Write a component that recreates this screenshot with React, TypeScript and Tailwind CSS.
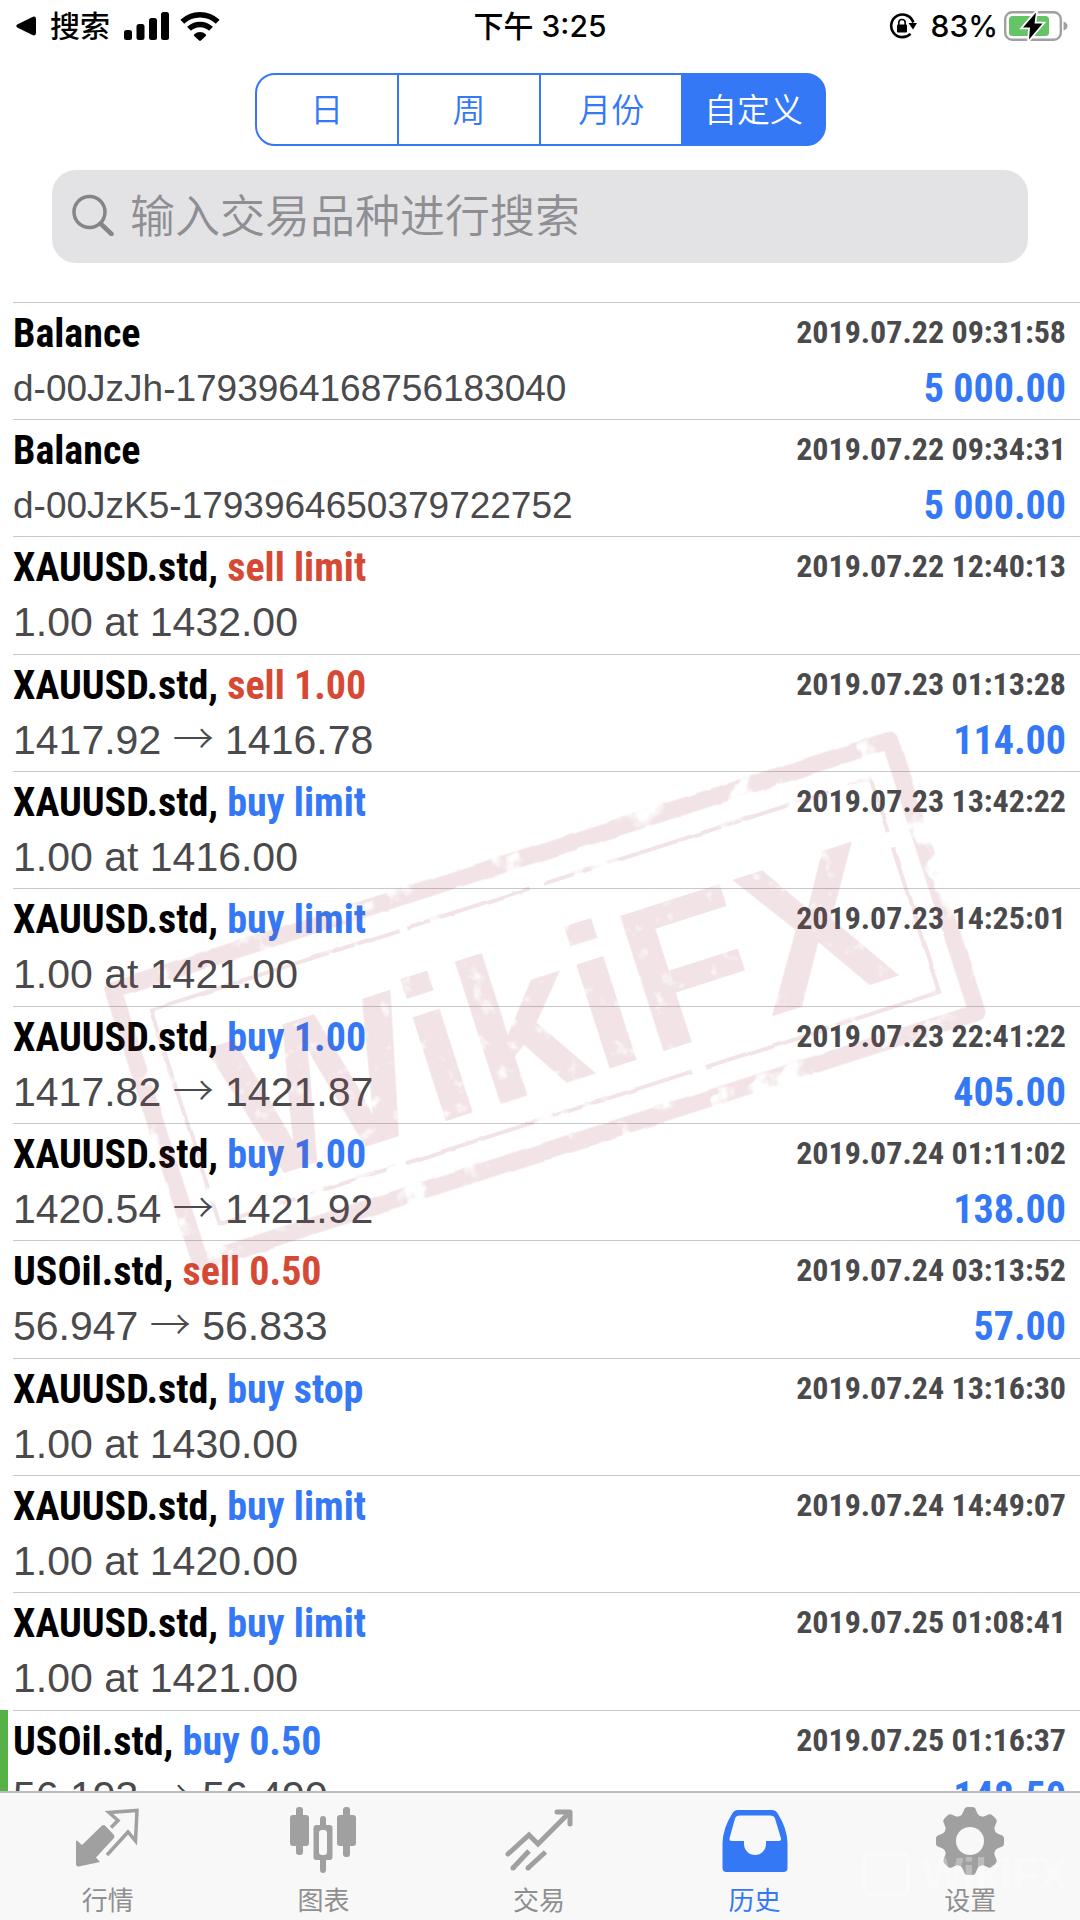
import { useState, type ReactNode } from "react";

type Side = "buy" | "sell";

interface HistoryItem {
  title: string;
  side?: Side;
  action?: string;
  detail?: string;
  from?: string;
  to?: string;
  time: string;
  profit?: string;
  marked?: boolean;
}

const HISTORY: HistoryItem[] = [
  { title: "Balance", detail: "d-00JzJh-1793964168756183040", time: "2019.07.22 09:31:58", profit: "5 000.00" },
  { title: "Balance", detail: "d-00JzK5-1793964650379722752", time: "2019.07.22 09:34:31", profit: "5 000.00" },
  { title: "XAUUSD.std", side: "sell", action: "limit", detail: "1.00 at 1432.00", time: "2019.07.22 12:40:13" },
  { title: "XAUUSD.std", side: "sell", action: "1.00", from: "1417.92", to: "1416.78", time: "2019.07.23 01:13:28", profit: "114.00" },
  { title: "XAUUSD.std", side: "buy", action: "limit", detail: "1.00 at 1416.00", time: "2019.07.23 13:42:22" },
  { title: "XAUUSD.std", side: "buy", action: "limit", detail: "1.00 at 1421.00", time: "2019.07.23 14:25:01" },
  { title: "XAUUSD.std", side: "buy", action: "1.00", from: "1417.82", to: "1421.87", time: "2019.07.23 22:41:22", profit: "405.00" },
  { title: "XAUUSD.std", side: "buy", action: "1.00", from: "1420.54", to: "1421.92", time: "2019.07.24 01:11:02", profit: "138.00" },
  { title: "USOil.std", side: "sell", action: "0.50", from: "56.947", to: "56.833", time: "2019.07.24 03:13:52", profit: "57.00" },
  { title: "XAUUSD.std", side: "buy", action: "stop", detail: "1.00 at 1430.00", time: "2019.07.24 13:16:30" },
  { title: "XAUUSD.std", side: "buy", action: "limit", detail: "1.00 at 1420.00", time: "2019.07.24 14:49:07" },
  { title: "XAUUSD.std", side: "buy", action: "limit", detail: "1.00 at 1421.00", time: "2019.07.25 01:08:41" },
  { title: "USOil.std", side: "buy", action: "0.50", from: "56.193", to: "56.490", time: "2019.07.25 01:16:37", profit: "148.50", marked: true },
];

const PERIODS = ["日", "周", "月份", "自定义"];

function StatusBar() {
  return (
    <header className="grid h-[52px] grid-cols-3 items-center px-4 font-['Inter','Noto_Sans_CJK_SC',sans-serif] text-[30px] leading-none font-medium text-black">
      <div className="flex items-center">
        <svg className="h-5 w-5" viewBox="0 0 20 20">
          <path d="M1.2 8.6 17 .7Q20 0 20 3v14q0 3-3 2.300L1.200 11.400Q-.6 10 1.200 8.600Z" />
        </svg>
        <span className="ml-3.5">搜索</span>
        <svg className="ml-3.5 h-[30px] w-[46px]" viewBox="0 0 46 30">
          <rect x="0" y="19" width="8" height="10" rx="2.500" />
          <rect x="12.500" y="13" width="8" height="16" rx="2.500" />
          <rect x="25" y="7" width="8" height="22" rx="2.500" />
          <rect x="37" y="1" width="8" height="28" rx="2.500" />
        </svg>
        <svg className="ml-2.5 h-[30px] w-10" viewBox="0 0 40 30">
          <g fill="none" stroke="#000" strokeWidth="5.500">
            <path d="M2.300 10.800a25.500 25.500 0 0 1 35.400 0" />
            <path d="M9 17.800a16 16 0 0 1 22 0" />
          </g>
          <path d="M14.300 23.200a8.500 8.500 0 0 1 11.400 0q.9.900 0 1.800L21 29.400q-1 .9-2 0L14.300 25q-.9-.9 0-1.800Z" />
        </svg>
      </div>
      <div className="text-center">下午 3:25</div>
      <div className="-mr-1 flex items-center justify-end">
        <svg className="h-7 w-7" viewBox="0 0 28 28">
          <path d="M24.300 10.500A11.300 11.300 0 1 0 21.500 21.800" fill="none" stroke="#000" strokeWidth="2.600" />
          <path d="M19.500 11h8.500l-4 6.500Z" />
          <rect x="8" y="12.500" width="10" height="8" rx="1" />
          <path d="M9.800 13v-2.300a3.200 3.200 0 0 1 6.400 0V13" fill="none" stroke="#000" strokeWidth="1.600" />
        </svg>
        <span className="ml-3.5">83%</span>
        <svg className="ml-1.5 h-8 w-16" viewBox="0 0 64 32">
          <rect x="1.200" y="2.200" width="55.600" height="27.600" rx="7" fill="#fff" stroke="#a0a0a4" strokeWidth="2.400" />
          <rect x="5" y="6" width="40" height="20" rx="3.500" fill="#64c466" />
          <path d="M59.500 11.500q4 1.500 4 4.500t-4 4.500Z" fill="#a0a0a4" />
          <path d="M32 2.500 19 17.500h7L25 29.500 38.500 13.500H30.500Z" stroke="#fff" strokeWidth="3.500" paintOrder="stroke" />
        </svg>
      </div>
    </header>
  );
}

function HistoryRow({ item }: { item: HistoryItem }) {
  const sideColor = item.side === "sell" ? "text-[#d64a35]" : "text-[#3478f6]";

  return (
    <li className="flex h-[117px] shrink-0 nth-[3n]:h-[118px]">
      <div className="w-[13px] shrink-0">{item.marked && <div className="h-full w-2 bg-[#56b147]" />}</div>
      <div className="flex-1 border-t border-[#c8c7cc] pt-[3px] pr-3.5">
        <div className="flex h-[55px] items-start justify-between font-['Roboto_Condensed','Liberation_Sans',sans-serif] font-bold">
          <h2 className="text-[40px] leading-[56px] text-black">
            {item.title}
            {item.side && (
              <>
                , <span className={sideColor}>{item.side} {item.action}</span>
              </>
            )}
          </h2>
          <time className="text-[32px] leading-[52px] text-[#4a4a4c]">{item.time}</time>
        </div>
        <div className="flex h-[55px] items-center justify-between">
          {item.from ? (
            <p className="text-[41px] leading-[55px] text-[#4a4a4c]">
              {item.from} <span className="font-['Noto_Sans_CJK_SC',sans-serif] font-light leading-none">→</span> {item.to}
            </p>
          ) : (
            <p className={item.side ? "text-[41px] leading-[55px] text-[#4a4a4c]" : "text-[37px] leading-[55px] text-[#4a4a4c]"}>
              {item.detail}
            </p>
          )}
          {item.profit && (
            <span className="font-['Roboto_Condensed','Liberation_Sans',sans-serif] text-[40px] leading-[55px] font-bold text-[#3478f6]">
              {item.profit}
            </span>
          )}
        </div>
      </div>
    </li>
  );
}

/* Worn rubber stamp laid over the list */
function Stamp() {
  return (
    <svg
      className="pointer-events-none absolute top-[414px] left-1/2 h-[580px] w-[920px] -translate-x-1/2"
      viewBox="0 0 920 580"
      aria-hidden="true"
    >
      <defs>
        <filter id="worn" x="-5%" y="-5%" width="110%" height="110%">
          <feTurbulence type="fractalNoise" baseFrequency="0.03" numOctaves="4" seed="8" result="noise" />
          <feColorMatrix in="noise" values="0 0 0 0 0  0 0 0 0 0  0 0 0 0 0  0 0 0 -7 5.200" result="holes" />
          <feComposite in="SourceGraphic" in2="holes" operator="in" result="cut" />
          <feDisplacementMap in="cut" in2="noise" scale="4" />
        </filter>
        <filter id="speckled" x="-5%" y="-5%" width="110%" height="110%">
          <feTurbulence type="fractalNoise" baseFrequency="0.060" numOctaves="3" seed="3" result="noise" />
          <feColorMatrix in="noise" values="0 0 0 0 0  0 0 0 0 0  0 0 0 0 0  0 0 0 -4 3.500" result="holes" />
          <feComposite in="SourceGraphic" in2="holes" operator="in" />
        </filter>
      </defs>
      <g transform="translate(465 285) rotate(-17.800)" opacity="0.140">
        <g filter="url(#worn)" fill="none" stroke="#a84452">
          <rect x="-408" y="-143" width="816" height="286" strokeWidth="17" strokeLinejoin="round" />
          <rect x="-378" y="-112" width="756" height="224" strokeWidth="4" strokeDasharray="260 8 130 14 300 10 90 16" />
        </g>
        <text
          x="-338"
          y="84"
          fill="#a84452"
          filter="url(#speckled)"
          className="font-['Liberation_Sans',sans-serif] text-[206px] font-bold"
        >
          WikiFX
        </text>
      </g>
    </svg>
  );
}

function QuotesIcon() {
  return (
    <svg className="h-[68px] w-[68px]" viewBox="0 0 68 68">
      <path d="M3 33.500 8 38 28 18.500q1.500-1.200 3 0L40 28q1 1.500 0 3L22 50.500l4 4.500-21 4.500q-3 .5-3-2.500V34Z" fill="#a0a0a0" />
      <path d="M37 20.500 44 13.500 35 5.500 63 3.500 61.500 34 54 25 33 48" fill="none" stroke="#a0a0a0" strokeWidth="3.500" />
    </svg>
  );
}

function ChartIcon() {
  return (
    <svg className="h-[68px] w-[68px]" viewBox="0 0 68 68" fill="#a0a0a0">
      <rect x="7" y="0" width="7" height="48" rx="3" />
      <rect x="1" y="8" width="19" height="31" rx="3" />
      <rect x="31" y="9" width="6" height="57" rx="3" />
      <rect x="24.500" y="18" width="19" height="35" rx="3" />
      <rect x="30" y="23" width="8" height="25" rx="3" fill="#f8f8f8" />
      <rect x="54" y="0" width="7" height="50" rx="3" />
      <rect x="48" y="8" width="19" height="31" rx="3" />
    </svg>
  );
}

function TradeIcon() {
  return (
    <svg className="h-[68px] w-[68px]" viewBox="0 0 68 68" fill="none" stroke="#a0a0a0">
      <path d="M3 47 24 28 33 37 64 6" strokeWidth="5" strokeLinecap="round" />
      <path d="M52 5h13v12" strokeWidth="5" strokeLinecap="round" strokeLinejoin="round" />
      <path d="M24 44 8 61M40.500 45 23 61" strokeWidth="5" />
      <path d="M8 61h.1M23 61h.1" strokeWidth="5" strokeLinecap="round" />
    </svg>
  );
}

function HistoryIcon() {
  return (
    <svg className="h-[68px] w-[68px]" viewBox="0 0 68 68">
      <path d="M17 3H51q4 0 6 4 9 14 9.500 29V61q0 4-4 4H5.500q-4 0-4-4V36Q2 21 11 7q2-4 6-4Z" fill="#3478f6" />
      <path d="M19 8.500H49q4 0 5 3l6 20q.5 2.500-2 2.500H45v3a11 11 0 0 1-22 0V34H10.500q-2.500 0-2-2.500L14 11.500q1-3 5-3Z" fill="#f8f8f8" />
    </svg>
  );
}

function SettingsIcon() {
  return (
    <svg className="h-[68px] w-[68px]" viewBox="0 0 68 68">
      <g transform="translate(34 34)" fill="#a0a0a0">
        <circle r="27" />
        {[0, 45, 90, 135, 180, 225, 270, 315].map((angle) => (
          <path key={angle} d="M-12.500-23.500q4-1 5.500-5l1-2.500q1-3 3.500-3h5q2.500 0 3.500 3l1 2.500q1.500 4 5.500 5Z" transform={`rotate(${angle})`} />
        ))}
        <circle r="14" fill="#f8f8f8" />
      </g>
    </svg>
  );
}

const TABS: { label: string; icon: ReactNode; active?: boolean }[] = [
  { label: "行情", icon: <QuotesIcon /> },
  { label: "图表", icon: <ChartIcon /> },
  { label: "交易", icon: <TradeIcon /> },
  { label: "历史", icon: <HistoryIcon />, active: true },
  { label: "设置", icon: <SettingsIcon /> },
];

export default function App() {
  const [period, setPeriod] = useState("自定义");

  return (
    <div className="relative flex h-screen w-full flex-col overflow-hidden bg-white font-['Liberation_Sans','Noto_Sans_CJK_SC',sans-serif]">
      <StatusBar />

      {/* Period switch */}
      <div className="mt-[21px] flex justify-center">
        <div className="grid h-[73px] w-[571px] grid-cols-4 gap-0.5 overflow-hidden rounded-[20px] border-2 border-[#3478f6] bg-[#3478f6]">
          {PERIODS.map((p) => (
            <button
              key={p}
              type="button"
              onClick={() => setPeriod(p)}
              className={
                p === period
                  ? "bg-[#3478f6] pb-0.5 font-['Noto_Sans_CJK_SC',sans-serif] text-[33px] font-[350] text-white"
                  : "bg-white pb-0.5 font-['Noto_Sans_CJK_SC',sans-serif] text-[33px] font-[350] text-[#3478f6]"
              }
            >
              {p}
            </button>
          ))}
        </div>
      </div>

      {/* Symbol search */}
      <label className="mx-[52px] mt-6 flex h-[93px] shrink-0 items-center rounded-[24px] bg-[#e3e3e6] pb-1.5 pl-5">
        <svg className="h-11 w-11" viewBox="0 0 44 44" fill="none" stroke="#858589">
          <circle cx="17.500" cy="20" r="15.500" strokeWidth="3.500" />
          <path d="M28.500 31.500 39.500 42" strokeWidth="4.500" strokeLinecap="round" />
        </svg>
        <input
          type="search"
          aria-label="搜索"
          placeholder="输入交易品种进行搜索"
          className="ml-3.5 h-full min-w-0 flex-1 bg-transparent font-['Noto_Sans_CJK_SC',sans-serif] text-[45px] font-[350] text-black outline-none placeholder:text-[#8e8e93]"
        />
      </label>

      <main className="relative mt-[39px] min-h-0 flex-1 overflow-hidden">
        <ul className="flex flex-col">
          {HISTORY.map((item) => (
            <HistoryRow key={item.time} item={item} />
          ))}
        </ul>
        <Stamp />
      </main>

      <nav className="relative grid h-[129px] shrink-0 grid-cols-5 border-t-2 border-[#bcbcbe] bg-[#f8f8f8] pr-0.5">
        {TABS.map((tab) => (
          <a
            key={tab.label}
            href="#"
            className={
              tab.active
                ? "flex flex-col items-center pt-3.5 text-[26px] leading-[52px] text-[#3478f6]"
                : "flex flex-col items-center pt-3.5 text-[26px] leading-[52px] text-[#8f8f8f]"
            }
          >
            {tab.icon}
            {tab.label}
          </a>
        ))}
        <div className="pointer-events-none absolute right-3 bottom-6 flex items-center gap-3 text-[44px] leading-none font-bold text-white opacity-30" aria-hidden="true">
          <span className="h-11 w-12 rounded-lg border-4 border-white" />
          WikiFX
        </div>
      </nav>
    </div>
  );
}
